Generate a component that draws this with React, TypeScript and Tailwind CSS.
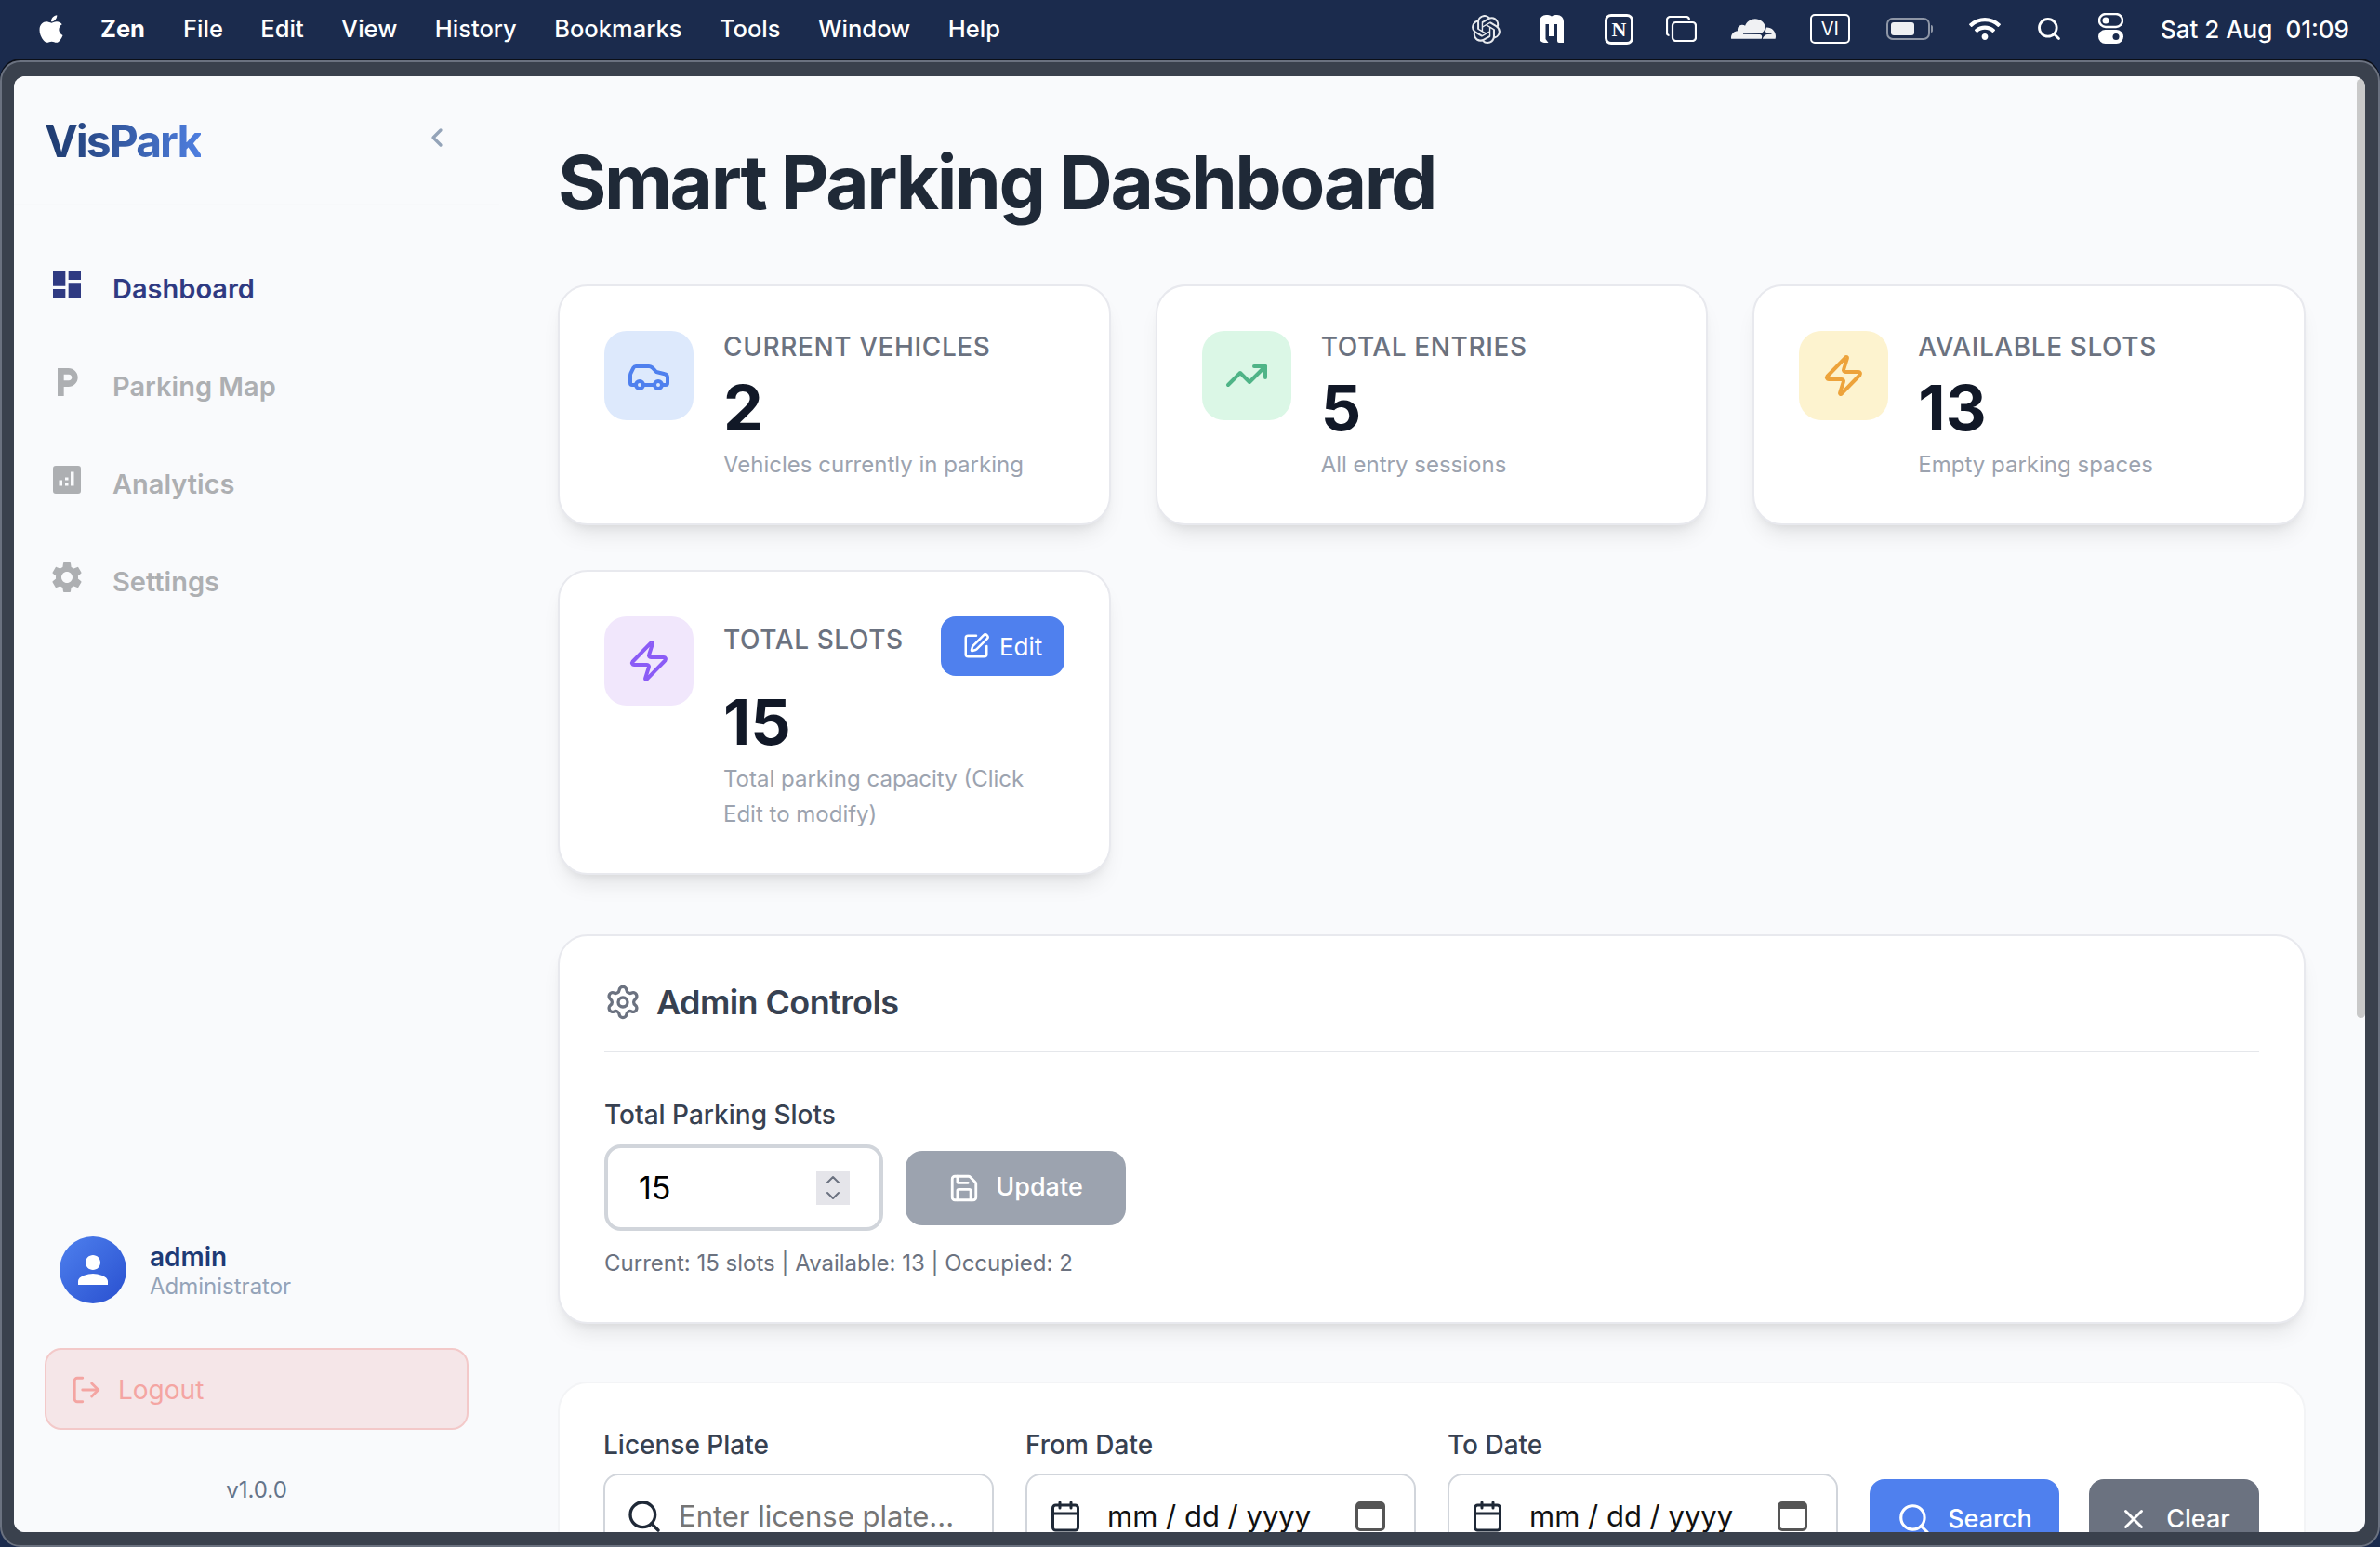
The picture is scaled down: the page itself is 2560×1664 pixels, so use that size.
import React from 'react';
import { Car, TrendingUp, Zap, SquarePen, Settings, Save, Search, Calendar, X, LogOut, ChevronLeft, ChevronUp, ChevronDown } from 'lucide-react';
import { MdDashboard, MdLocalParking, MdSettings, MdPerson } from 'react-icons/md';
import { FaApple, FaWifi } from 'react-icons/fa';
import { SiOpenai, SiCloudflare } from 'react-icons/si';

const menuItems = ['File', 'Edit', 'View', 'History', 'Bookmarks', 'Tools', 'Window', 'Help'];

const MenuBar = () => (
  <div className="h-[65px] shrink-0 bg-[#1b2b4d] flex items-center text-white text-[25.5px] font-medium pl-[40px] pr-[33px] pb-[3px]">
    <FaApple className="w-[30px] h-[34px]" />
    <span className="ml-[38px] font-bold">Zen</span>
    <div className="flex items-center gap-[40.5px] ml-[41px]">
      {menuItems.map((m) => (
        <span key={m}>{m}</span>
      ))}
    </div>
    <div className="ml-auto flex items-center">
      <SiOpenai className="w-[31px] h-[31px] text-[#e6e8ec]" />
      <svg viewBox="0 0 28 32" className="w-[28px] h-[32px] ml-[41px]">
        <path d="M1 8a7 7 0 0 1 7-7h2a6 6 0 0 1 4 1.5A6 6 0 0 1 18 1h2a7 7 0 0 1 7 7v23h-5a2 2 0 0 1-2-2V11h-3v13h-6V11H7.500v16l3 4H6a5 5 0 0 1-5-5z" fill="#fff" />
      </svg>
      <div className="w-[31px] h-[33px] ml-[43px] border-[3px] border-white rounded-[7px] flex items-center justify-center font-['Liberation_Serif',serif] font-bold text-[22px]">N</div>
      <svg viewBox="0 0 33 28" className="w-[33px] h-[28px] ml-[35px]" fill="none" stroke="#fff" strokeWidth="2.2">
        <rect x="7" y="7" width="25" height="20" rx="3.500" />
        <path d="M3.500 21A2.500 2.500 0 0 1 1 18.500V4.500A3.500 3.500 0 0 1 4.500 1h17A3.500 3.500 0 0 1 25 4" />
      </svg>
      <SiCloudflare className="w-[48px] h-[48px] ml-[37px] text-[#f0f1f3]" />
      <div className="w-[43px] h-[32px] ml-[37px] border-[2.5px] border-white rounded-[5px] flex items-center justify-center text-[20px] font-normal">VI</div>
      <div className="ml-[39px] flex items-center">
        <div className="w-[47px] h-[24px] border-[2px] border-[#8e96a6] rounded-[7px] p-[3px] flex">
          <div className="w-[25px] h-full bg-[#eef0f3] rounded-[3px]" />
        </div>
        <div className="w-[2px] h-[8px] ml-[1px] bg-[#8e96a6] rounded-r-full" />
      </div>
      <FaWifi className="w-[34px] h-[30px] ml-[39px]" />
      <Search className="w-[28px] h-[28px] ml-[38px]" strokeWidth={2.4} />
      <svg viewBox="0 0 27 34" className="w-[27px] h-[34px] ml-[39px]">
        <rect x="1" y="1" width="25" height="14" rx="7" fill="none" stroke="#fff" strokeWidth="2.4" />
        <circle cx="8" cy="8" r="3.500" fill="#fff" />
        <rect x="0" y="18" width="27" height="15" rx="7.500" fill="#fff" />
        <circle cx="19" cy="25.500" r="3.500" fill="#1b2b4d" />
      </svg>
      <span className="ml-[40px] text-[26px]">Sat 2 Aug</span>
      <span className="ml-[14px] text-[26px]">01:09</span>
    </div>
  </div>
);

const AnalyticsIcon = ({ className }: { className?: string }) => (
  <svg viewBox="0 0 40 40" className={className}>
    <path fillRule="evenodd" fill="currentColor" d="M8 5h24a3 3 0 0 1 3 3v24a3 3 0 0 1-3 3H8a3 3 0 0 1-3-3V8a3 3 0 0 1 3-3zM11.500 20.500v6h3.500v-6zM18 17.500v3h3.500v-3zM18 23v3.500h3.500V23zM24 11.500v15h3.500v-15z" />
  </svg>
);

const navItems = [
  { label: 'Dashboard', icon: MdDashboard, active: true },
  { label: 'Parking Map', icon: MdLocalParking },
  { label: 'Analytics', icon: AnalyticsIcon },
  { label: 'Settings', icon: MdSettings },
];

const Sidebar = () => (
  <aside className="w-[522px] shrink-0 h-full flex flex-col bg-[#f9fafc]">
    <div className="h-[138px] shrink-0 border-b border-[#f7f8fa] pl-[33px] pr-[51px] flex items-start justify-between">
      <span className="mt-[41px] text-[48px] leading-[58px] font-bold tracking-[-2px] bg-gradient-to-r from-[#1e3a6e] to-[#4f7fe0] bg-clip-text text-transparent">VisPark</span>
      <ChevronLeft className="w-[32px] h-[32px] mt-[50px] text-[#94a3b8]" strokeWidth={2.5} />
    </div>
    <nav className="pt-[38px] flex flex-col">
      {navItems.map((item) => {
        const Icon = item.icon;
        return (
          <div key={item.label} className={`h-[105px] flex items-center pl-[37px] ${item.active ? 'text-[#2f3a82]' : 'text-[#adafb2]'}`}>
            <Icon className="w-[40px] h-[40px] mb-[10px]" />
            <span className="ml-[29px] text-[29px] font-semibold">{item.label}</span>
          </div>
        );
      })}
    </nav>
    <div className="mt-auto pl-[33px] pr-[33px] pb-[28px]">
      <div className="flex items-center pl-[16px]">
        <div className="w-[72px] h-[72px] rounded-full bg-gradient-to-br from-[#4f80ee] to-[#2a4fcf] flex items-center justify-center">
          <MdPerson className="w-[48px] h-[48px] text-white" />
        </div>
        <div className="ml-[25px] flex flex-col pt-[2px]">
          <span className="text-[28px] leading-[34px] font-semibold text-[#1e3a76]">admin</span>
          <span className="text-[24px] leading-[30px] text-[#94a3b8]">Administrator</span>
        </div>
      </div>
      <div className="mt-[48px] h-[88px] border-[2px] border-[#f3c9c9] bg-[#f5e6e8] rounded-[18px] flex items-center pl-[26px] pt-[2px] text-[#f4a5a2]">
        <LogOut className="w-[34px] h-[34px]" strokeWidth={2} />
        <span className="ml-[17px] text-[28px]">Logout</span>
      </div>
      <div className="mt-[48px] text-center text-[24px] leading-[34px] text-[#64748b]">v1.0.0</div>
    </div>
  </aside>
);

const stats = [
  { label: 'CURRENT VEHICLES', value: '2', sub: 'Vehicles currently in parking', icon: Car, box: 'bg-[#dde9fc]', color: 'text-[#4f80ee]' },
  { label: 'TOTAL ENTRIES', value: '5', sub: 'All entry sessions', icon: TrendingUp, box: 'bg-[#dbf7e6]', color: 'text-[#4fb487]' },
  { label: 'AVAILABLE SLOTS', value: '13', sub: 'Empty parking spaces', icon: Zap, box: 'bg-[#fdf3cf]', color: 'text-[#eda33b]' },
];

const cardClass = 'bg-white rounded-[32px] border-[2px] border-[#e8e9ee] shadow-[0_16px_24px_-8px_rgba(0,0,0,0.1),0_6px_10px_-4px_rgba(0,0,0,0.06)]';

const StatCard = ({ s }: { s: (typeof stats)[number] }) => {
  const Icon = s.icon;
  return (
    <div className={`${cardClass} pt-[48px] pb-[44px] px-[48px] flex items-start gap-[32px]`}>
      <div className={`w-[96px] h-[96px] rounded-[24px] flex items-center justify-center ${s.box}`}>
        <Icon className={`w-[48px] h-[48px] ${s.color}`} strokeWidth={2} />
      </div>
      <div className="flex flex-col">
        <span className="text-[28px] leading-[34px] font-medium tracking-[0.6px] text-[#6b7280]">{s.label}</span>
        <span className="mt-[16px] text-[68px] leading-[64px] font-bold text-[#111827]">{s.value}</span>
        <span className="mt-[11px] text-[24px] leading-[38px] text-[#9ca3af]">{s.sub}</span>
      </div>
    </div>
  );
};

const TotalSlotsCard = () => (
  <div className={`${cardClass} pt-[48px] pb-[44px] px-[48px] flex items-start gap-[32px]`}>
    <div className="w-[96px] h-[96px] shrink-0 rounded-[24px] flex items-center justify-center bg-[#f1e7fc]">
      <Zap className="w-[48px] h-[48px] text-[#8b5cf6]" strokeWidth={2} />
    </div>
    <div className="flex flex-col flex-1">
      <div className="flex items-start justify-between h-[64px]">
        <span className="mt-[8px] text-[28px] leading-[34px] font-medium tracking-[0.6px] text-[#6b7280]">TOTAL SLOTS</span>
        <div className="w-[133px] h-[64px] rounded-[16px] bg-[#4f80ee] text-white flex items-center justify-center gap-[10px] text-[26px]">
          <SquarePen className="w-[30px] h-[30px]" strokeWidth={2} />
          Edit
        </div>
      </div>
      <span className="mt-[17px] text-[68px] leading-[64px] font-bold text-[#111827]">15</span>
      <span className="mt-[11px] text-[24px] leading-[38px] text-[#9ca3af]">Total parking capacity (Click Edit to modify)</span>
    </div>
  </div>
);

const AdminPanel = () => (
  <section className={`${cardClass} mt-[64px] px-[48px] pb-[45px]`}>
    <div className="h-[125px] border-b-[2px] border-[#e5e7eb] flex items-center gap-[16px] pt-[19px]">
      <Settings className="w-[40px] h-[40px] text-[#6b7280]" strokeWidth={2} />
      <span className="text-[36px] font-semibold tracking-[-0.6px] text-[#374151]">Admin Controls</span>
    </div>
    <div className="mt-[49px] text-[28px] leading-[36px] font-medium text-[#374151]">Total Parking Slots</div>
    <div className="mt-[14px] flex items-center gap-[24px]">
      <div className="w-[300px] h-[93px] rounded-[18px] border-[4px] border-[#d1d5db] bg-white flex items-center justify-between pl-[33px] pr-[32px]">
        <span className="text-[34px] text-black">15</span>
        <div className="w-[36px] h-[36px] bg-[#e5e5ea] flex flex-col items-center justify-center text-[#6b7280]">
          <ChevronUp className="w-[24px] h-[24px] -my-[3.5px]" strokeWidth={2} />
          <ChevronDown className="w-[24px] h-[24px] -my-[3.5px]" strokeWidth={2} />
        </div>
      </div>
      <div className="w-[237px] h-[80px] rounded-[18px] bg-[#9ca3af] text-white flex items-center justify-center gap-[17px] text-[27px] font-medium">
        <Save className="w-[34px] h-[34px]" strokeWidth={2} />
        Update
      </div>
    </div>
    <div className="mt-[17px] text-[24px] leading-[36px] text-[#6b7280]">Current: 15 slots | Available: 13 | Occupied: 2</div>
  </section>
);

const DateField = ({ label }: { label: string }) => (
  <div className="w-[420px] shrink-0 mr-[34px]">
    <div className="text-[28px] leading-[36px] font-medium text-[#374151]">{label}</div>
    <div className="mt-[13px] h-[92px] rounded-[16px] border-[2px] border-[#d1d5db] flex items-center pl-[23px] pr-[31px]">
      <Calendar className="w-[36px] h-[40px] text-[#1f2937]" strokeWidth={2} />
      <span className="ml-[27px] text-[31px] text-[#111]">mm / dd / yyyy</span>
      <div className="ml-auto w-[32px] h-[32px] rounded-[5px] border-[3px] border-[#555] border-t-[8px]" />
    </div>
  </div>
);

const FilterPanel = () => (
  <section className="mt-[62px] bg-white rounded-[32px] border-[2px] border-[#f3f4f6] px-[47px] pt-[48px] pb-[40px] flex items-end">
    <div className="w-[420px] shrink-0 mr-[34px]">
      <div className="text-[28px] leading-[36px] font-medium text-[#374151]">License Plate</div>
      <div className="mt-[13px] h-[92px] rounded-[16px] border-[2px] border-[#d1d5db] flex items-center pl-[22px]">
        <Search className="w-[40px] h-[40px] text-[#1f2937]" strokeWidth={2} />
        <span className="ml-[17px] text-[31px] text-[#757575]">Enter license plate...</span>
      </div>
    </div>
    <DateField label="From Date" />
    <DateField label="To Date" />
    <div className="w-[204px] shrink-0 h-[86px] rounded-[16px] bg-[#4f80ee] text-white flex items-center justify-center gap-[17px] text-[27px] font-medium">
      <Search className="w-[38px] h-[38px]" strokeWidth={2} />
      Search
    </div>
    <div className="w-[183px] ml-[32px] shrink-0 h-[86px] rounded-[16px] bg-[#6b7280] text-white flex items-center justify-center gap-[18px] text-[27px] font-medium">
      <X className="w-[34px] h-[34px]" strokeWidth={2} />
      Clear
    </div>
  </section>
);

export default function App() {
  return (
    <div className="w-[2560px] h-[1664px] overflow-hidden flex flex-col bg-[#1b2b4d] font-['Inter',sans-serif]">
      <MenuBar />
      <div className="flex-1 min-h-0 bg-[#3a414d] rounded-[22px] border-[2px] border-[#6b7280] shadow-[0_-2px_0_#0b0f18] pt-[15px] pl-[13px] pr-[14px] pb-[14px]">
        <div className="relative h-full rounded-[12px] overflow-hidden bg-[#f9fafc] flex">
          <Sidebar />
          <main className="flex-1 min-w-0 h-full overflow-hidden pl-[63px] pr-[64px]">
            <h1 className="pt-[66px] text-[80px] leading-[96px] font-bold tracking-[-2.4px] text-[#1f2937] mb-[62px]">Smart Parking Dashboard</h1>
            <div className="grid grid-cols-3 gap-[48px]">
              {stats.map((s) => (
                <StatCard key={s.label} s={s} />
              ))}
              <TotalSlotsCard />
            </div>
            <AdminPanel />
            <FilterPanel />
          </main>
          <div className="absolute right-0 top-[3px] w-[9px] h-[1010px] rounded-full bg-[#c9c9c9]" />
        </div>
      </div>
    </div>
  );
}
